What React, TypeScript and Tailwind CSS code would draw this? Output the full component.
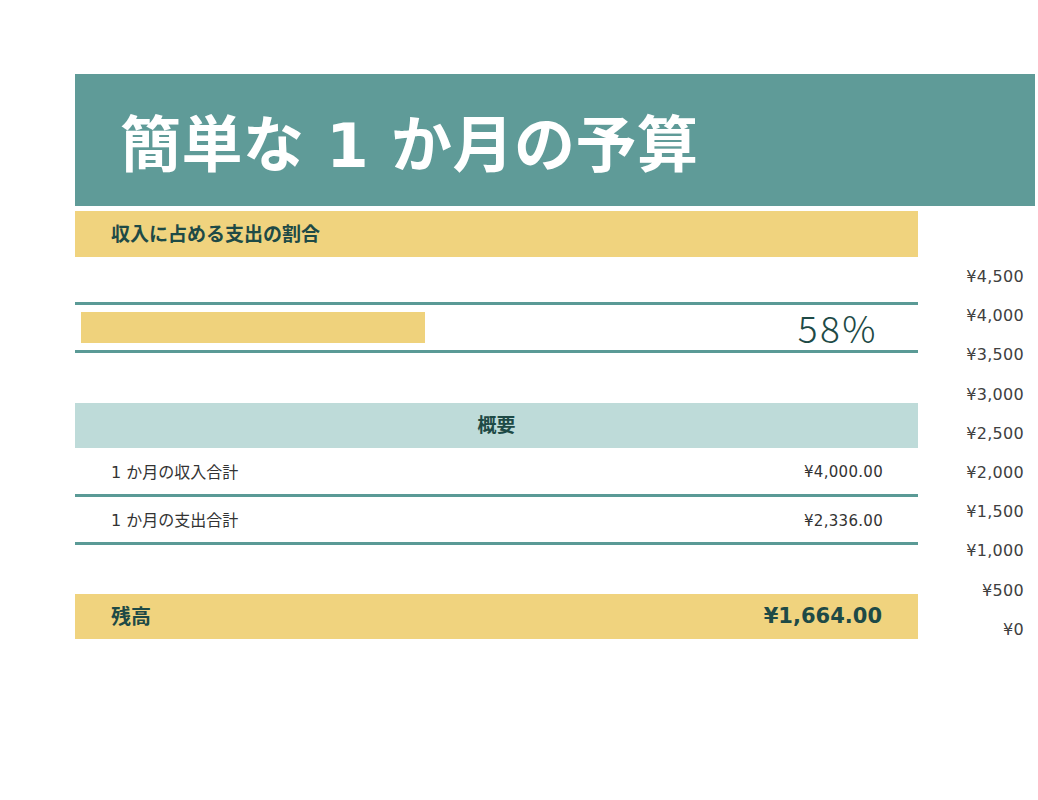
import React from "react";

const font = { fontFamily: "'DejaVu Sans', 'Noto Sans CJK JP', sans-serif" };

export default function App() {
  const axis = ["¥4,500", "¥4,000", "¥3,500", "¥3,000", "¥2,500", "¥2,000", "¥1,500", "¥1,000", "¥500", "¥0"];
  return (
    <div className="w-[1038px] h-[800px] bg-white pt-[74px] pl-[75px]" style={font}>
      <div className="w-[960px] h-[132px] bg-[#5f9b98] flex items-center pl-[45px] pt-[10px]">
        <h1 className="text-[61px] font-bold text-white leading-none tracking-[0.5px]">簡単な 1 か月の予算</h1>
      </div>
      <div className="flex pt-[5px]">
        <div className="w-[843px] flex flex-col">
          <div className="h-[46px] bg-[#f0d37e] flex items-center pl-[36px]">
            <span className="text-[19px] font-bold text-[#1e4a46]">収入に占める支出の割合</span>
          </div>
          <div className="h-[45px]" />
          <div className="h-[51px] border-y-[3px] border-[#5a9a96] flex items-center justify-between pl-[6px] pr-[40px]">
            <div className="w-[344px] h-[31px] bg-[#efd27c]" />
            <span
              className="text-[37px] font-light text-[#1e4a46] leading-none tracking-[2.5px]"
              style={{ fontFamily: "'Noto Sans CJK JP', sans-serif", fontWeight: 300 }}
            >
              58%
            </span>
          </div>
          <div className="h-[50px]" />
          <div className="h-[45px] bg-[#bedbd9] flex items-center justify-center">
            <span className="text-[19px] font-bold text-[#1e4a46]">概要</span>
          </div>
          <div className="h-[49px] border-b-[3px] border-[#5a9a96] flex items-center justify-between pl-[36px] pr-[35px] pt-[3px] text-[#333]">
            <span className="text-[16px]">1 か月の収入合計</span>
            <span className="text-[15px] tracking-[0.3px]">¥4,000.00</span>
          </div>
          <div className="h-[48px] border-b-[3px] border-[#5a9a96] flex items-center justify-between pl-[36px] pr-[35px] pt-[3px] text-[#333]">
            <span className="text-[16px]">1 か月の支出合計</span>
            <span className="text-[15px] tracking-[0.3px]">¥2,336.00</span>
          </div>
          <div className="h-[49px]" />
          <div className="h-[45px] bg-[#f0d37e] flex items-center justify-between pl-[36px] pr-[36px]">
            <span className="text-[20px] font-bold text-[#1e4a46]">残高</span>
            <span className="text-[21px] font-bold text-[#1e4a46]">¥1,664.00</span>
          </div>
        </div>
        <div className="w-[106px] flex flex-col items-end pt-[46px]">
          {axis.map((a) => (
            <div key={a} className="h-[39.2px] leading-[39.2px] text-[16px] tracking-[0.3px] text-[#404040]">
              {a}
            </div>
          ))}
        </div>
      </div>
    </div>
  );
}
